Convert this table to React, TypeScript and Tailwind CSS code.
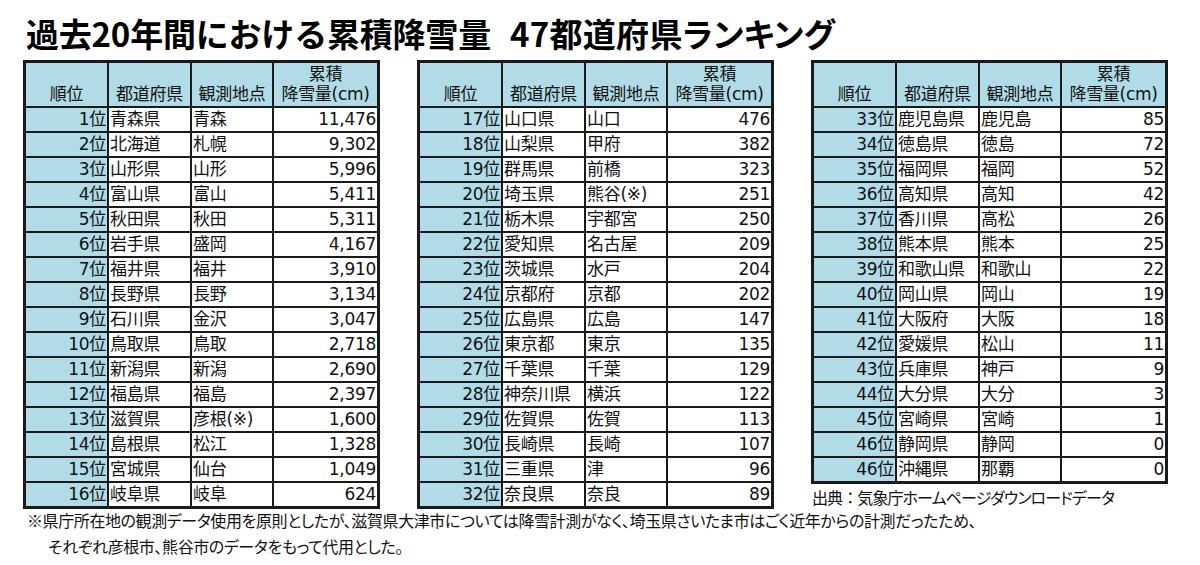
import React from "react";

type Row = [string, string, string, string];

const t1: Row[] = [
  ["1位", "青森県", "青森", "11,476"],
  ["2位", "北海道", "札幌", "9,302"],
  ["3位", "山形県", "山形", "5,996"],
  ["4位", "富山県", "富山", "5,411"],
  ["5位", "秋田県", "秋田", "5,311"],
  ["6位", "岩手県", "盛岡", "4,167"],
  ["7位", "福井県", "福井", "3,910"],
  ["8位", "長野県", "長野", "3,134"],
  ["9位", "石川県", "金沢", "3,047"],
  ["10位", "鳥取県", "鳥取", "2,718"],
  ["11位", "新潟県", "新潟", "2,690"],
  ["12位", "福島県", "福島", "2,397"],
  ["13位", "滋賀県", "彦根(※)", "1,600"],
  ["14位", "島根県", "松江", "1,328"],
  ["15位", "宮城県", "仙台", "1,049"],
  ["16位", "岐阜県", "岐阜", "624"],
];
const t2: Row[] = [
  ["17位", "山口県", "山口", "476"],
  ["18位", "山梨県", "甲府", "382"],
  ["19位", "群馬県", "前橋", "323"],
  ["20位", "埼玉県", "熊谷(※)", "251"],
  ["21位", "栃木県", "宇都宮", "250"],
  ["22位", "愛知県", "名古屋", "209"],
  ["23位", "茨城県", "水戸", "204"],
  ["24位", "京都府", "京都", "202"],
  ["25位", "広島県", "広島", "147"],
  ["26位", "東京都", "東京", "135"],
  ["27位", "千葉県", "千葉", "129"],
  ["28位", "神奈川県", "横浜", "122"],
  ["29位", "佐賀県", "佐賀", "113"],
  ["30位", "長崎県", "長崎", "107"],
  ["31位", "三重県", "津", "96"],
  ["32位", "奈良県", "奈良", "89"],
];
const t3: Row[] = [
  ["33位", "鹿児島県", "鹿児島", "85"],
  ["34位", "徳島県", "徳島", "72"],
  ["35位", "福岡県", "福岡", "52"],
  ["36位", "高知県", "高知", "42"],
  ["37位", "香川県", "高松", "26"],
  ["38位", "熊本県", "熊本", "25"],
  ["39位", "和歌山県", "和歌山", "22"],
  ["40位", "岡山県", "岡山", "19"],
  ["41位", "大阪府", "大阪", "18"],
  ["42位", "愛媛県", "松山", "11"],
  ["43位", "兵庫県", "神戸", "9"],
  ["44位", "大分県", "大分", "3"],
  ["45位", "宮崎県", "宮崎", "1"],
  ["46位", "静岡県", "静岡", "0"],
  ["46位", "沖縄県", "那覇", "0"],
];

const tableFont = { fontFamily: '"DejaVu Sans", "Noto Sans CJK JP", sans-serif' };

function RankTable({ rows }: { rows: Row[] }) {
  return (
    <div
      className="w-[357px] border-[3px] border-[#1a1a1a] grid grid-cols-[81px_83px_82px_105px] text-[17px] leading-none tracking-[-0.3px] text-[#111]"
      style={tableFont}
    >
      <div className="h-[43px] bg-[#b0dbe7] flex items-end justify-center pb-[3px]">順位</div>
      <div className="h-[43px] bg-[#b0dbe7] border-l-2 border-[#1a1a1a] flex items-end justify-center pb-[3px]">都道府県</div>
      <div className="h-[43px] bg-[#b0dbe7] border-l-2 border-[#1a1a1a] flex items-end justify-center pb-[3px]">観測地点</div>
      <div className="h-[43px] bg-[#b0dbe7] border-l-2 border-[#1a1a1a] flex flex-col items-center justify-end pb-[3px] gap-[3px]">
        <span>累積</span>
        <span>降雪量(cm)</span>
      </div>
      {rows.map((r, i) => (
        <React.Fragment key={i}>
          <div className="h-[25px] border-t-2 border-[#1a1a1a] bg-[#b0dbe7] flex items-center justify-end pr-[1px]">{r[0]}</div>
          <div className="h-[25px] border-t-2 border-l-2 border-[#1a1a1a] bg-white flex items-center pl-[1px] whitespace-nowrap overflow-hidden">{r[1]}</div>
          <div className="h-[25px] border-t-2 border-l-2 border-[#1a1a1a] bg-white flex items-center pl-[1px] whitespace-nowrap overflow-hidden">{r[2]}</div>
          <div className="h-[25px] border-t-2 border-l-2 border-[#1a1a1a] bg-white flex items-center justify-end pr-[1px]">{r[3]}</div>
        </React.Fragment>
      ))}
    </div>
  );
}

export default function App() {
  return (
    <div
      className="w-[1200px] h-[565px] bg-white overflow-hidden pl-[23px] pt-[17px] text-[#111]"
      style={{ fontFamily: '"Noto Sans CJK JP", "Noto Sans", sans-serif' }}
    >
      <h1 className="pl-[3px] text-[33px] leading-none font-bold text-black h-[43px] whitespace-nowrap tracking-[-0.2px]">
        過去20年間における累積降雪量<span className="inline-block w-[19px]" />
        <span className="[font-feature-settings:'palt'] tracking-[0.3px]">47都道府県ランキング</span>
      </h1>
      <div className="flex gap-[37px] items-start">
        <RankTable rows={t1} />
        <RankTable rows={t2} />
        <div className="flex flex-col">
          <RankTable rows={t3} />
          <div className="text-[16px] leading-none pl-[1px] pt-[5px] tracking-[-0.9px] whitespace-nowrap [font-feature-settings:'palt']">
            出典<span className="[font-feature-settings:normal]">：</span>気象庁ホームページダウンロードデータ
          </div>
        </div>
      </div>
      <div className="text-[16px] leading-[26px] mt-[-2px] pl-[4px] tracking-[-0.4px] whitespace-nowrap [font-feature-settings:'palt']">
        <div>※県庁所在地の観測データ使用を原則としたが、滋賀県大津市については降雪計測がなく、埼玉県さいたま市はごく近年からの計測だったため、</div>
        <div className="pl-[21px]">それぞれ彦根市、熊谷市のデータをもって代用とした。</div>
      </div>
    </div>
  );
}
